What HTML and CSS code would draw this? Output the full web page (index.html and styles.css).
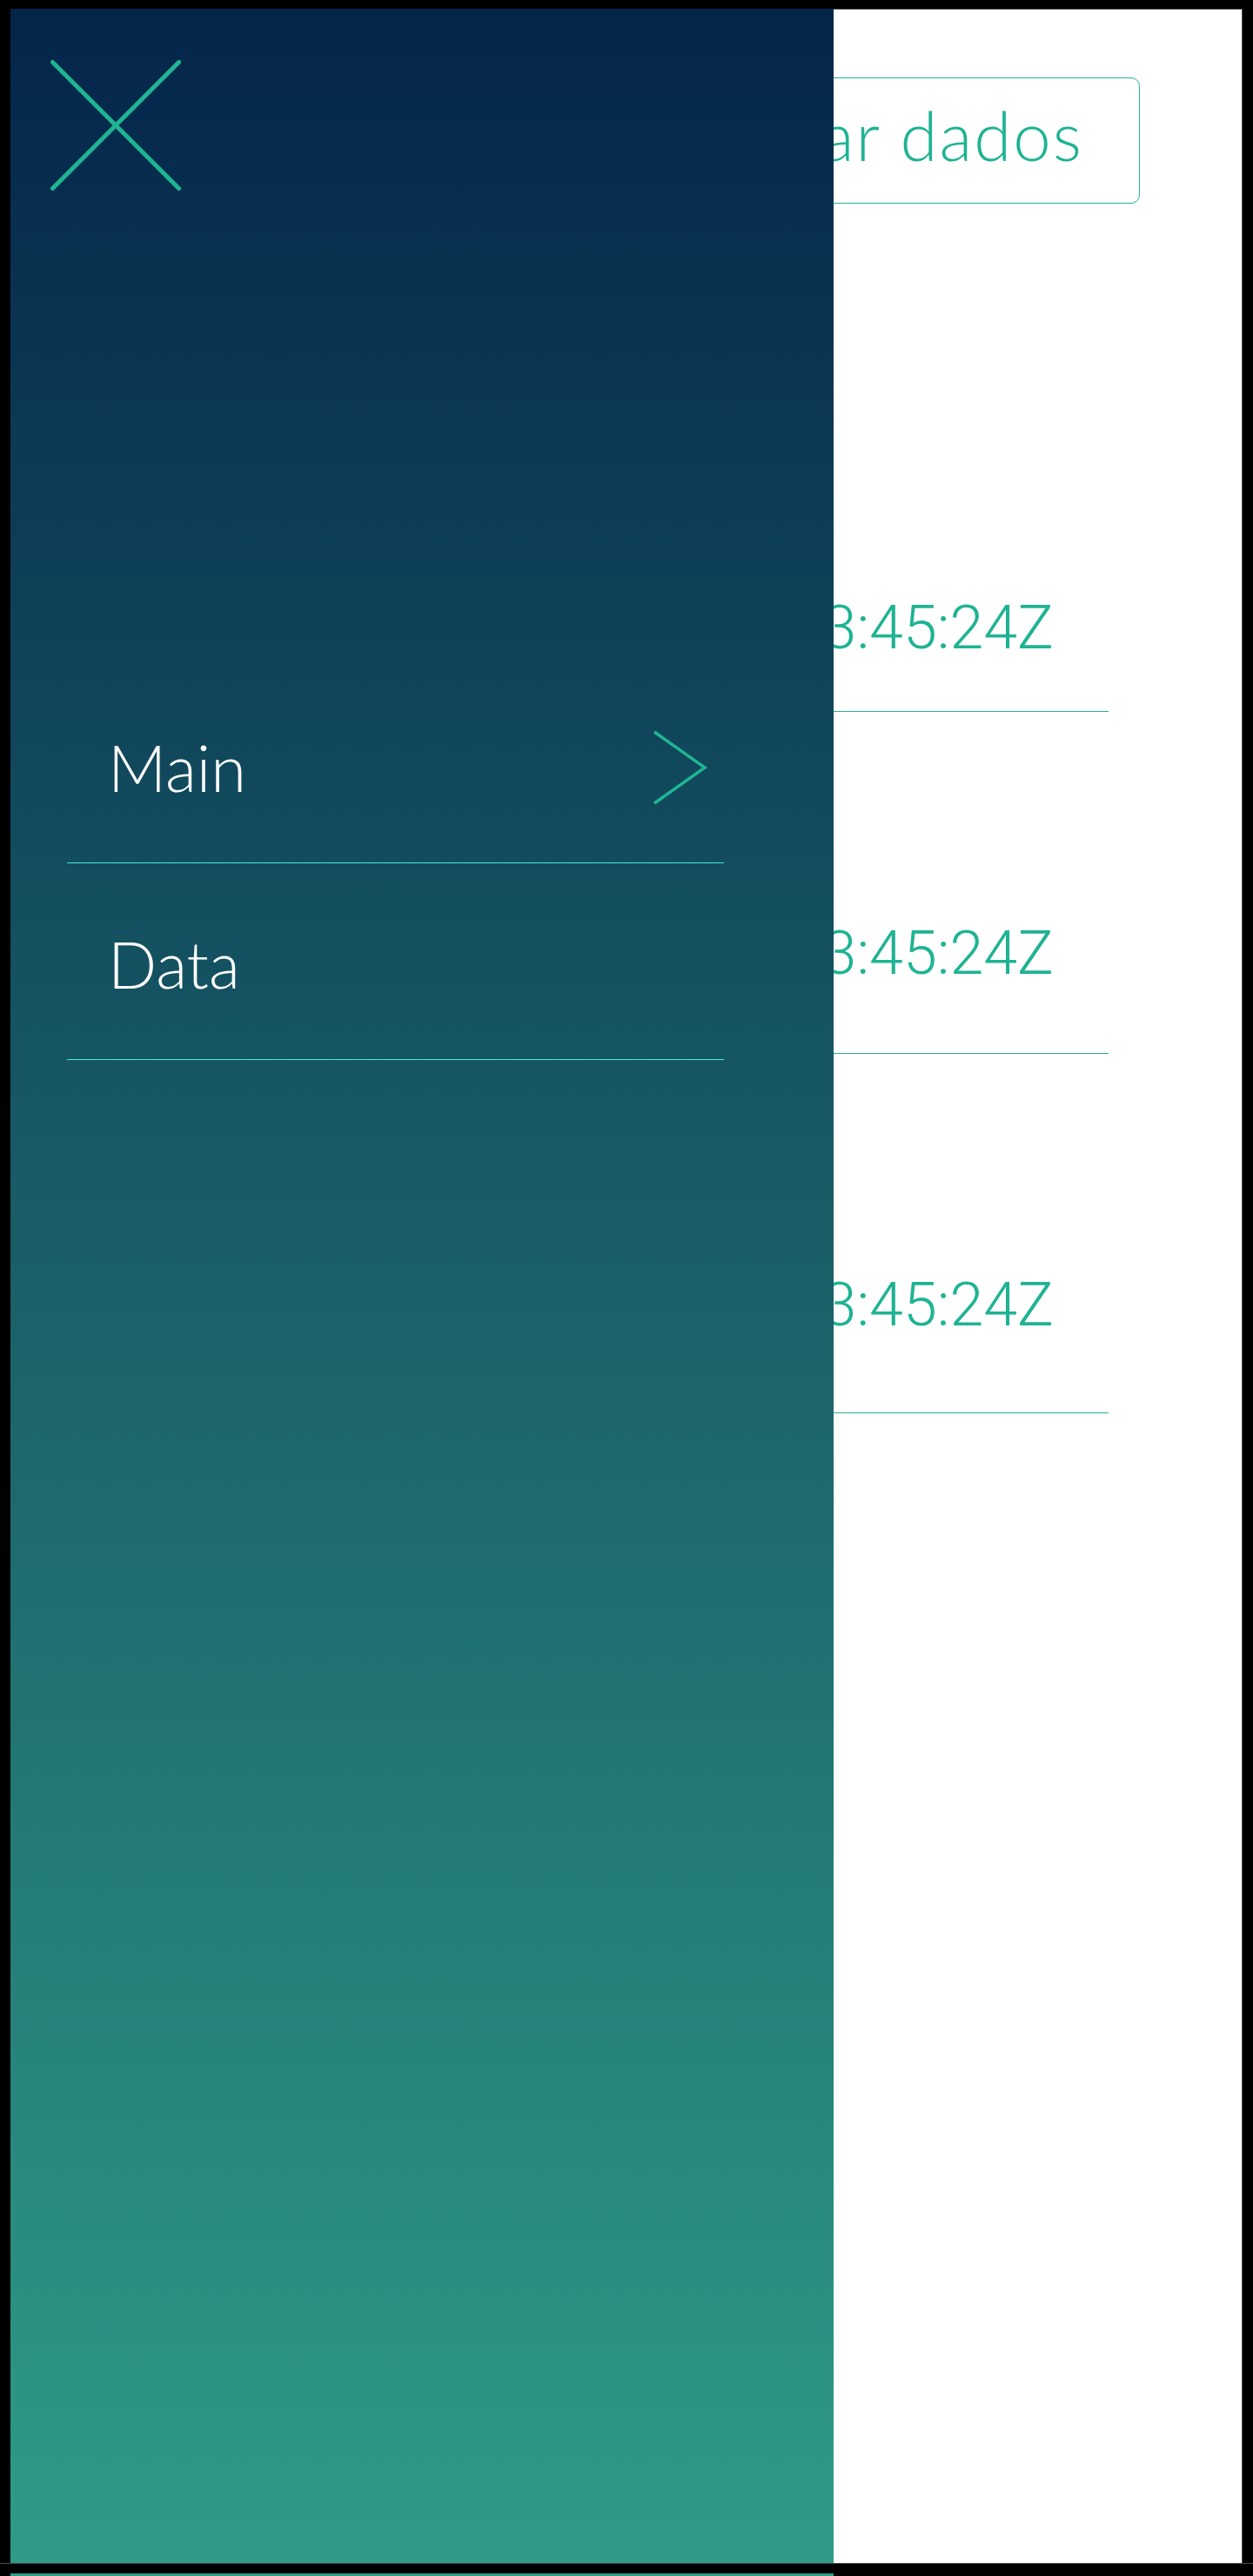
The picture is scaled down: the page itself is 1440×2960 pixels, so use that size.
FILE: index.html
```html
<!DOCTYPE html>
<html lang="pt">
<head>
<meta charset="utf-8">
<title>Dados</title>
<link rel="stylesheet" href="styles.css">
</head>
<body>
<div class="device">
  <div class="screen">
    <main class="content">
      <div class="toolbar">
        <button class="btn-outline">Atualizar dados</button>
      </div>
      <ul class="records">
        <li class="record record--first"><span class="stamp">2019-03-12T13:45:24Z</span></li>
        <li class="record record--second"><span class="stamp">2019-03-12T13:45:24Z</span></li>
        <li class="record record--third"><span class="stamp">2019-03-12T13:45:24Z</span></li>
      </ul>
    </main>

    <aside class="drawer">
      <button class="drawer-close" aria-label="Fechar">
        <svg width="150" height="150" viewBox="0 0 150 150">
          <line x1="2.5" y1="2.5" x2="147.5" y2="147.5"/>
          <line x1="147.5" y1="2.5" x2="2.5" y2="147.5"/>
        </svg>
      </button>
      <nav class="drawer-nav">
        <a class="nav-item" href="#">
          <span>Main</span>
          <svg class="chevron" width="64" height="86" viewBox="0 0 64 86">
            <polyline points="2,2 60,43 2,84"/>
          </svg>
        </a>
        <a class="nav-item" href="#"><span>Data</span></a>
      </nav>
    </aside>

    <div class="bezel-bottom"></div>
  </div>
</div>
</body>
</html>
```

FILE: styles.css
```css
html, body {
  margin: 0;
  padding: 0;
}

body {
  background: #000;
  font-family: "Lato", "Liberation Sans", sans-serif;
}

.device {
  padding: 10px 12px 14px 12px;
}

.screen {
  position: relative;
  height: 2936px;
  box-sizing: border-box;
  background: #fff;
  border: 1px solid #4a4a4a;
}

/* main content */
.content {
  padding: 78px 117px 0 60px;
}

.toolbar {
  display: flex;
  justify-content: flex-end;
}

.btn-outline {
  font-family: "Lato", "Liberation Sans", sans-serif;
  font-weight: 300;
  font-size: 78px;
  letter-spacing: 2px;
  line-height: 94px;
  color: #1fb393;
  background: #fff;
  border: 1px solid #1fb393;
  border-radius: 10px;
  padding: 18px 64px 31px 60px;
  margin: 0;
}

.records {
  list-style: none;
  margin: 200px 36px 0 0;
  padding: 0;
}

.record {
  border-bottom: 1px solid #1fb393;
  text-align: right;
  padding-right: 63px;
}

.record--first { padding-top: 247px; padding-bottom: 56px; }
.record--second { padding-top: 237px; padding-bottom: 75px; }
.record--third { padding-top: 248px; padding-bottom: 84px; }

.stamp {
  display: block;
  font-family: "Roboto", "Liberation Sans", sans-serif;
  font-weight: 300;
  font-size: 70px;
  line-height: 80px;
  color: #1fb393;
  white-space: nowrap;
}

/* drawer overlay */
.drawer {
  position: absolute;
  top: -1px;
  left: -1px;
  z-index: 1;
  width: 946px;
  height: 2950px;
  box-sizing: border-box;
  padding-top: 59px;
  background: linear-gradient(to bottom, #04254a 0%, #309c87 100%);
}

.drawer-close {
  display: block;
  margin: 0 0 0 46px;
  padding: 0;
  width: 150px;
  height: 150px;
  background: none;
  border: 0;
}

.drawer-close svg {
  display: block;
}

.drawer-close line {
  stroke: #1fb593;
  stroke-width: 5;
  stroke-linecap: round;
}

.drawer-nav {
  margin: 547px 126px 0 65px;
}

.nav-item {
  display: flex;
  align-items: center;
  justify-content: space-between;
  padding: 71px 18px 65px 47px;
  border-bottom: 1px solid #45e6e0;
  color: #fff;
  text-decoration: none;
  font-weight: 300;
  font-size: 74px;
  line-height: 89px;
}

.chevron polyline {
  fill: none;
  stroke: #1fb593;
  stroke-width: 3.5;
}

.bezel-bottom {
  position: absolute;
  left: -13px;
  right: -13px;
  top: 2934px;
  z-index: 2;
  height: 11px;
  background: #000;
  border-top: 1px solid #4a4a4a;
}
```
